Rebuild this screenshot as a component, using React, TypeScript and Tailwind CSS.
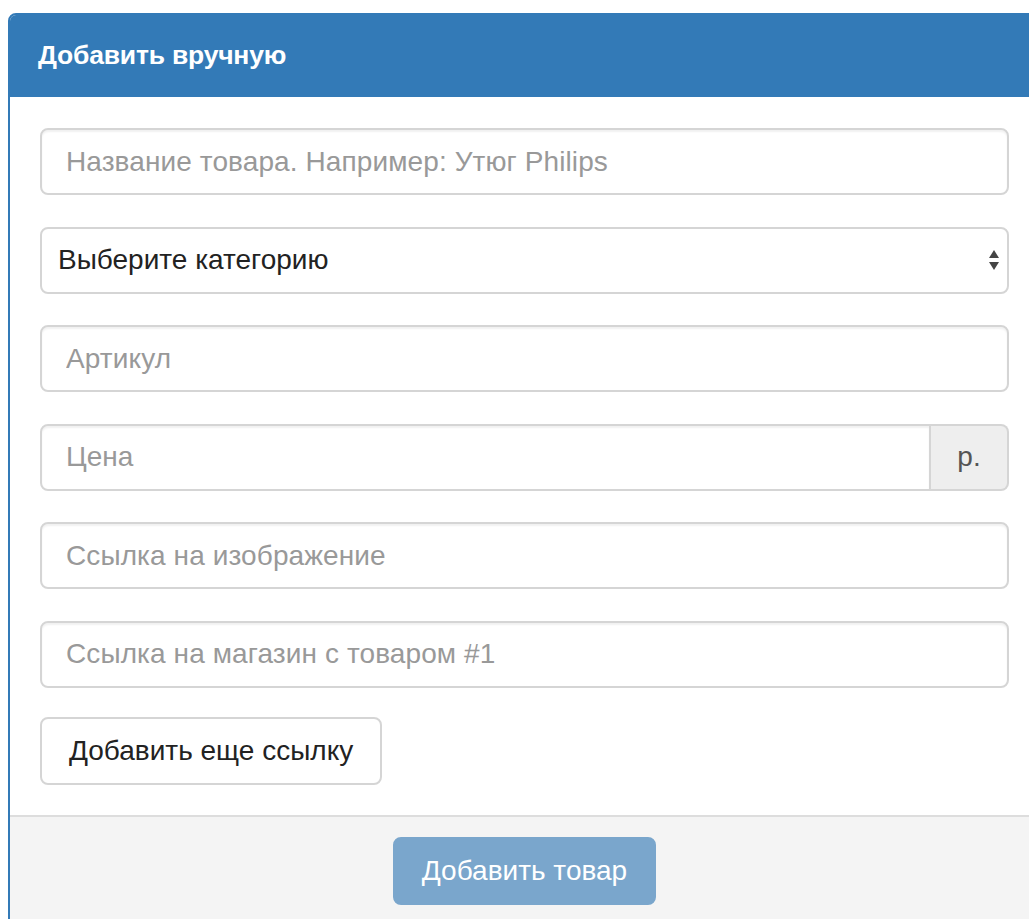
import React from "react";

const font = { fontFamily: '"Liberation Sans", Arial, sans-serif' };

function TextField({ placeholder }: { placeholder: string }) {
  return (
    <input
      type="text"
      placeholder={placeholder}
      className="block h-[67px] w-full rounded-[8px] border-2 border-[#d5d5d5] bg-white px-[24px] text-[28px] tracking-[0.1px] text-[#555] shadow-[inset_0_2px_2px_rgba(0,0,0,0.06)] outline-none placeholder:text-[#999]"
    />
  );
}

export default function App() {
  return (
    <div className="h-[919px] w-[1029px] overflow-hidden bg-white" style={font}>
      <div className="ml-[8px] mt-[13px] w-[1033px] overflow-hidden rounded-t-[8px] border-2 border-[#337ab7]">
        {/* Heading */}
        <div className="flex h-[82px] items-center bg-[#337ab7] px-[28px]">
          <h3 className="text-[26.5px] font-bold tracking-[-0.2px] text-white">Добавить вручную</h3>
        </div>

        {/* Body */}
        <div className="flex flex-col gap-[31.5px] bg-white px-[30px] pb-[30px] pt-[31px]">
          <TextField placeholder="Название товара. Например: Утюг Philips" />

          <div className="relative">
            <select className="block h-[67px] w-full appearance-none rounded-[8px] border-2 border-[#d5d5d5] bg-white px-[16px] text-[28px] text-[#222] outline-none">
              <option>Выберите категорию</option>
            </select>
            <svg
              className="pointer-events-none absolute right-[8px] top-1/2 -translate-y-1/2"
              width="14"
              height="24"
              viewBox="0 0 14 24"
            >
              <path d="M7 2 L12 10 H2 Z" fill="#444" />
              <path d="M7 22 L12 14 H2 Z" fill="#444" />
            </svg>
          </div>

          <TextField placeholder="Артикул" />

          <div className="flex h-[67px]">
            <input
              type="text"
              placeholder="Цена"
              className="block h-full min-w-0 flex-1 rounded-l-[8px] border-2 border-[#d5d5d5] bg-white px-[24px] text-[28px] text-[#555] shadow-[inset_0_2px_2px_rgba(0,0,0,0.06)] outline-none placeholder:text-[#999]"
            />
            <span className="flex w-[78px] items-center justify-center rounded-r-[8px] border-2 border-l-0 border-[#d5d5d5] bg-[#eee] text-[28px] text-[#555]">
              р.
            </span>
          </div>

          <TextField placeholder="Ссылка на изображение" />
          <TextField placeholder="Ссылка на магазин с товаром #1" />

          <div className="-mt-[2px]">
            <button className="h-[68px] rounded-[8px] border-2 border-[#d5d5d5] bg-white px-[27px] text-[28px] text-[#222]">
              Добавить еще ссылку
            </button>
          </div>
        </div>

        {/* Footer */}
        <div className="border-t-2 border-[#ddd] bg-[#f4f4f4] pb-[40px] pt-[20px] text-center">
          <button
            disabled
            className="h-[68px] rounded-[8px] border-2 border-[#7aa6cc] bg-[#7aa6cc] px-[26.5px] text-[28px] text-white"
          >
            Добавить товар
          </button>
        </div>
      </div>
    </div>
  );
}
